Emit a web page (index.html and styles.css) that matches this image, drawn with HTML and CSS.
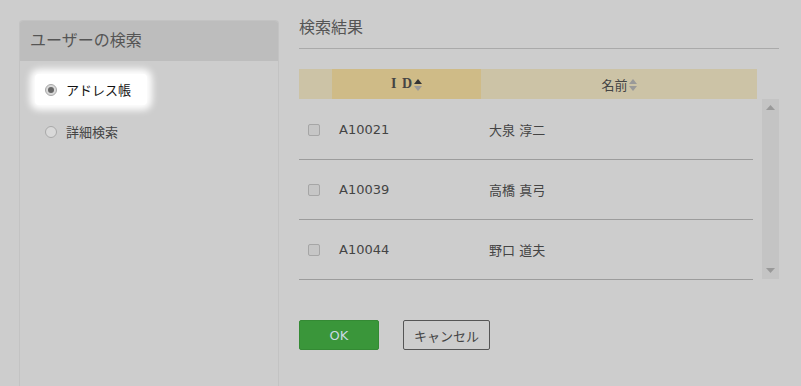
FILE: index.html
```html
<!DOCTYPE html>
<html lang="ja">
<head>
  <meta charset="UTF-8">
  <title>ユーザーの検索</title>
  <link rel="stylesheet" href="styles.css">
</head>
<body>
  <div class="page">
    <div class="search-panel">
      <div class="panel-header">ユーザーの検索</div>
      <div class="options">
        <label class="option selected"><span class="radio checked"></span>アドレス帳</label>
        <label class="option"><span class="radio"></span>詳細検索</label>
      </div>
    </div>

    <div class="results">
      <h2 class="results-title">検索結果</h2>

      <div class="table-head">
        <div class="col-check"></div>
        <div class="col-id sorted">
          <span class="id-label">I D</span>
          <svg class="sort" width="8" height="12" viewBox="0 0 8 12"><path d="M4 0 L8 5 L0 5 Z" fill="#333"/><path d="M0 7 L8 7 L4 12 Z" fill="#999"/></svg>
        </div>
        <div class="col-name">
          <span>名前</span>
          <svg class="sort" width="8" height="12" viewBox="0 0 8 12"><path d="M4 0 L8 5 L0 5 Z" fill="#999"/><path d="M0 7 L8 7 L4 12 Z" fill="#999"/></svg>
        </div>
      </div>

      <div class="table-body">
        <div class="rows">
          <div class="row">
            <div class="col-check"><span class="checkbox"></span></div>
            <div class="col-id">A10021</div>
            <div class="col-name">大泉 淳二</div>
          </div>
          <div class="row">
            <div class="col-check"><span class="checkbox"></span></div>
            <div class="col-id">A10039</div>
            <div class="col-name">高橋 真弓</div>
          </div>
          <div class="row">
            <div class="col-check"><span class="checkbox"></span></div>
            <div class="col-id">A10044</div>
            <div class="col-name">野口 道夫</div>
          </div>
        </div>
        <div class="scrollbar">
          <svg width="9" height="5" viewBox="0 0 9 5"><path d="M4.5 0 L9 5 L0 5 Z" fill="#999"/></svg>
          <svg width="9" height="5" viewBox="0 0 9 5"><path d="M0 0 L9 0 L4.5 5 Z" fill="#999"/></svg>
        </div>
      </div>

      <div class="actions">
        <button class="btn btn-ok">OK</button>
        <button class="btn btn-cancel">キャンセル</button>
      </div>
    </div>
  </div>
</body>
</html>
```

FILE: styles.css
```css
* {
  box-sizing: border-box;
  margin: 0;
  padding: 0;
}

body {
  background: #cdcdcd;
  font-family: "DejaVu Sans", "Noto Sans CJK JP", sans-serif;
  font-size: 13px;
  color: #444;
  overflow: hidden;
}

.page {
  display: flex;
  gap: 20px;
  padding: 20px 0 0 19px;
}

/* left panel */
.search-panel {
  width: 260px;
  height: 380px;
  border: 1px solid #c3c3c3;
  border-bottom: none;
  border-radius: 4px 4px 0 0;
}

.panel-header {
  height: 40px;
  background: #bdbdbd;
  border-radius: 3px 3px 0 0;
  padding-left: 10px;
  font-size: 16px;
  line-height: 39px;
  color: #555;
}

.options {
  padding: 13px 0 0 15px;
}

.option {
  display: flex;
  align-items: center;
  gap: 9px;
  width: 112px;
  height: 31px;
  padding-left: 10px;
  margin-bottom: 11px;
  color: #444;
}

.option.selected {
  background: #fff;
  border-radius: 4px;
  box-shadow: 0 0 7px 5px #fff;
  color: #111;
}

.radio {
  width: 12px;
  height: 12px;
  border-radius: 50%;
  border: 1px solid #a9a9a9;
  background: #d9d9d9;
  display: flex;
  align-items: center;
  justify-content: center;
}

.radio.checked::after {
  content: "";
  width: 6px;
  height: 6px;
  border-radius: 50%;
  background: #666;
}

/* results */
.results {
  width: 480px;
}

.results-title {
  font-size: 16px;
  font-weight: normal;
  line-height: 20px;
  margin-top: -2px;
  padding-bottom: 10px;
  border-bottom: 1px solid #aaa;
  color: #555;
}

.table-head {
  display: flex;
  width: 458px;
  height: 30px;
  margin-top: 20px;
  background: #ccc3a6;
}

.table-head > div {
  display: flex;
  align-items: center;
  justify-content: center;
  gap: 1px;
}

.col-check {
  width: 33px;
}

.col-id {
  width: 149px;
}

.col-name {
  flex: 1;
}

.table-head .sorted {
  background: #cfbb87;
}

.id-label {
  font-family: "Liberation Serif", serif;
  font-weight: bold;
  font-size: 14px;
  letter-spacing: 1px;
  color: #444;
}

.sort {
  margin-top: 1px;
}

.table-body {
  display: flex;
  gap: 9px;
}

.rows {
  width: 454px;
  margin-top: 1px;
}

.row {
  display: flex;
  align-items: center;
  height: 60px;
  border-bottom: 1px solid #9c9c9c;
}

.row .col-check {
  display: flex;
  justify-content: center;
  padding-right: 3px;
}

.row .col-id {
  padding-left: 7px;
}

.row .col-name {
  padding-left: 8px;
}

.checkbox {
  width: 12px;
  height: 12px;
  border: 1px solid #a6a6a6;
  border-radius: 2px;
  background: #c6c6c6;
}

.scrollbar {
  width: 17px;
  height: 180px;
  background: #c4c4c4;
  display: flex;
  flex-direction: column;
  justify-content: space-between;
  align-items: center;
  padding: 6px 0 6px;
}

.actions {
  display: flex;
  gap: 24px;
  margin-top: 40px;
}

.btn {
  height: 30px;
  border-radius: 2px;
  font-family: "DejaVu Sans", "Noto Sans CJK JP", sans-serif;
  font-size: 13px;
}

.btn-ok {
  width: 80px;
  background: #3a963a;
  border: 1px solid #348a34;
  color: #c9d9e3;
}

.btn-cancel {
  width: 87px;
  background: transparent;
  border: 1px solid #555;
  color: #444;
}
```
